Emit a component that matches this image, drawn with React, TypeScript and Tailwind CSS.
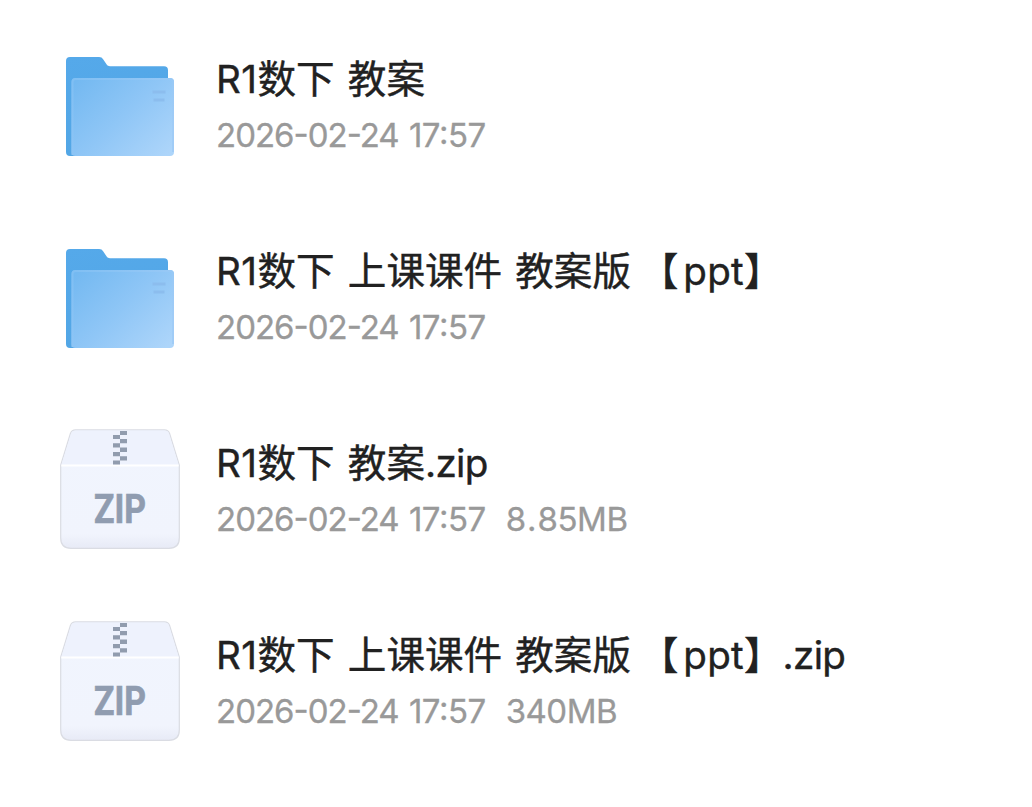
import { Fragment } from 'react'
import clsx from 'clsx'

interface FileItem {
  kind: 'folder' | 'zip'
  name: string
  date: string
  time: string
  size?: string
}

const files: FileItem[] = [
  { kind: 'folder', name: 'R1数下 教案', date: '2026-02-24', time: '17:57' },
  { kind: 'folder', name: 'R1数下 上课课件 教案版 【ppt】', date: '2026-02-24', time: '17:57' },
  { kind: 'zip', name: 'R1数下 教案.zip', date: '2026-02-24', time: '17:57', size: '8.85MB' },
  { kind: 'zip', name: 'R1数下 上课课件 教案版 【ppt】.zip', date: '2026-02-24', time: '17:57', size: '340MB' },
]

function FolderIcon() {
  return (
    <svg viewBox="0 0 120 120" className="size-[120px] shrink-0">
      <defs>
        <linearGradient id="folder-back" x1="0" y1="0" x2="0.3" y2="1">
          <stop offset="0" stopColor="#55a9ea" />
          <stop offset="1" stopColor="#52a6e5" />
        </linearGradient>
        <linearGradient id="folder-front" x1="0" y1="0.1" x2="1" y2="0.9">
          <stop offset="0" stopColor="#74b9f1" />
          <stop offset="0.5" stopColor="#8fc6f6" />
          <stop offset="1" stopColor="#add5fa" />
        </linearGradient>
        <linearGradient id="folder-edge" x1="0" y1="0" x2="1" y2="0.6">
          <stop offset="0" stopColor="#80bff3" />
          <stop offset="1" stopColor="#a0ccf7" />
        </linearGradient>
      </defs>
      <path
        d="M10 12H39C41 12 42.3 12.8 43.3 14.5L46.5 19.3C47.5 20.7 48.5 21.2 50 21.2H104Q108 21.2 108 25.2V111H10Q6 111 6 107V16Q6 12 10 12Z"
        fill="url(#folder-back)"
      />
      <rect x="11.5" y="33" width="102.5" height="78" rx="4" fill="url(#folder-front)" />
      <path d="M12.5 110V37Q12.5 34 15.5 34H110Q113 34 113 37V107" fill="none" stroke="url(#folder-edge)" strokeWidth="2" />
      <path d="M92.5 47H105.5M93.5 55H104.5" stroke="#8cbdee" strokeWidth="3" />
    </svg>
  )
}

function ZipIcon() {
  return (
    <svg viewBox="0 0 120 120" className="size-[120px] shrink-0">
      <defs>
        <linearGradient id="zip-body" x1="0" y1="0" x2="0" y2="1">
          <stop offset="0" stopColor="#f1f5fe" />
          <stop offset="0.88" stopColor="#f1f4fd" />
          <stop offset="1" stopColor="#e7eaf6" />
        </linearGradient>
      </defs>
      <path
        d="M15.5 .8H104.5Q108.2 .8 109.6 4.5L119.3 36V109Q119.3 119.3 109 119.3H11Q.7 119.3 .7 109V36L10.4 4.5Q11.8 .8 15.5 .8Z"
        fill="url(#zip-body)"
        stroke="#dadce3"
        strokeWidth="1.2"
      />
      <path d="M15.5 1.5H104.5Q108 1.5 109 4.7L118.5 35.5H1.5L11 4.7Q12 1.5 15.5 1.5Z" fill="#eef2fd" />
      <path d="M1.3 36.5H118.7" stroke="#fff" strokeWidth="2" />
      {/* Zipper teeth */}
      <path
        d="M60 2H67V6H60ZM53 6H60V10H53ZM60 10H67V14.3H60ZM53 14.3H60V18.6H53ZM60 18.6H67V23H60ZM53 23H60V27.2H53ZM60 27.2H67V31.4H60ZM53 31.4H60V35.5H53Z"
        fill="#919cae"
      />
      <text
        x="34"
        y="93.5"
        textLength="52"
        lengthAdjust="spacingAndGlyphs"
        stroke="#909cb0"
        strokeWidth="0.7"
        className="fill-[#909cb0] font-['Roboto',sans-serif] text-[40px] font-bold"
      >
        ZIP
      </text>
    </svg>
  )
}

const runStyles: Record<string, string> = {
  R1: 'tracking-[0.5px]',
  ppt: 'tracking-[0.3px]',
  '.zip': 'tracking-[-0.7px]',
  ' 【': 'mr-[5px] [word-spacing:0px]',
}

// Latin runs use a tighter face than the CJK glyphs around them
function FileName({ name }: { name: string }) {
  const runs = name.split(/([A-Za-z0-9.]+| 【)/).filter(Boolean)
  return (
    <p className="-mt-[3px] mb-[3px] h-14 text-[38.6px] leading-14 text-[#212121] whitespace-pre [word-spacing:4.5px] [-webkit-text-stroke:0.4px_#212121] font-['Noto_Sans_CJK_SC',sans-serif]">
      {runs.map((run, i) => (
        <Fragment key={i}>
          {runStyles[run] ? (
            <span className={clsx(run !== ' 【' && "font-['Inter','Noto_Sans_CJK_SC',sans-serif]", runStyles[run])}>
              {run}
            </span>
          ) : (
            run
          )}
        </Fragment>
      ))}
    </p>
  )
}

function FileSize({ size }: { size: string }) {
  const [whole, rest] = size.split('.')
  return (
    <span className="ml-5 tracking-[-0.5px]">
      {whole}
      {rest && <span className="px-[1.5px]">.</span>}
      {rest}
    </span>
  )
}

export default function App() {
  return (
    <main className="h-[807px] w-full overflow-hidden bg-white pt-[9px]">
      <ul>
        {files.map((file) => (
          <li key={file.name} className="flex h-48 items-center gap-9 pl-[60px]">
            {file.kind === 'folder' ? <FolderIcon /> : <ZipIcon />}
            <div className="flex flex-col pt-1">
              <FileName name={file.name} />
              <p className="h-14 text-[33px] leading-14 tracking-[-1px] text-[#999] whitespace-pre [-webkit-text-stroke:0.3px_#999] [font-feature-settings:'case'] font-['Inter','Noto_Sans_CJK_SC',sans-serif]">
                <span>{file.date}</span>
                <span className="ml-[1.5px] tracking-[-0.5px]"> {file.time}</span>
                {file.size && <FileSize size={file.size} />}
              </p>
            </div>
          </li>
        ))}
      </ul>
    </main>
  )
}
